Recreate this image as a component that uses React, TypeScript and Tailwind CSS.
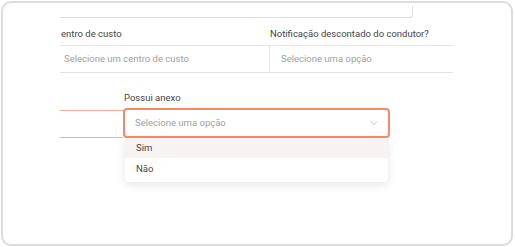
import { ChevronDown } from "lucide-react";

const font = "font-['Roboto','Liberation_Sans',sans-serif]";

export default function App() {
  return (
    <div className={`w-[515px] h-[247px] bg-white p-[1px] ${font}`}>
      <div className="h-[245px] w-[512px] border-2 border-[#dcdcdc] rounded-[10px] overflow-hidden">
        <div className="ml-[57px] w-[393px]">
          {/* previous input (cut off) */}
          <div className="mt-[3px] h-[12px] w-[353px] border-b border-r border-[#dedede] rounded-br-[3px]" />

          {/* labels */}
          <div className="flex pt-[9px] pb-[4px] text-[9.5px] leading-[14px] text-[#444]">
            <div className="w-[209px] pl-[1px]">entro de custo</div>
            <div className="ml-[1px]">Notificação descontado do condutor?</div>
          </div>

          {/* selects row */}
          <div className="flex h-[28px] border-y border-[#e3e3e3] text-[9.5px] text-[#a0a0a0]">
            <div className="w-[209px] flex items-center pl-[4px]">
              Selecione um centro de custo
            </div>
            <div className="flex-1 flex items-center border-l border-[#e3e3e3] pl-[11px]">
              Selecione uma opção
            </div>
          </div>

          {/* possui anexo row */}
          <div className="flex mt-[18px]">
            <div className="w-[63px] mt-[19px] h-[28px] border-y border-[#f4aa9c]" />
            <div className="relative">
              <div className="text-[9.5px] leading-[14px] text-[#444] pl-[1px]">
                Possui anexo
              </div>
              <div className="mt-[3px] h-[30px] w-[267px] border-2 border-[#f58a6a] rounded-[4px] flex items-center justify-between pl-[10px] pr-[8px] text-[9.5px] text-[#a0a0a0]">
                <span>Selecione uma opção</span>
                <ChevronDown className="w-[12px] h-[12px] text-[#b0b0b0]" strokeWidth={1.5} />
              </div>
              <div className="absolute left-[2px] top-[47px] w-[263px] bg-white rounded-b-[4px] shadow-[0_3px_10px_rgba(0,0,0,0.1)] text-[9.5px] text-[#444] pb-[2px]">
                <div className="h-[20px] bg-[#f8f3f3] flex items-center pl-[11px]">Sim</div>
                <div className="h-[22px] flex items-center pl-[11px]">Não</div>
              </div>
            </div>
          </div>
        </div>
      </div>
    </div>
  );
}
